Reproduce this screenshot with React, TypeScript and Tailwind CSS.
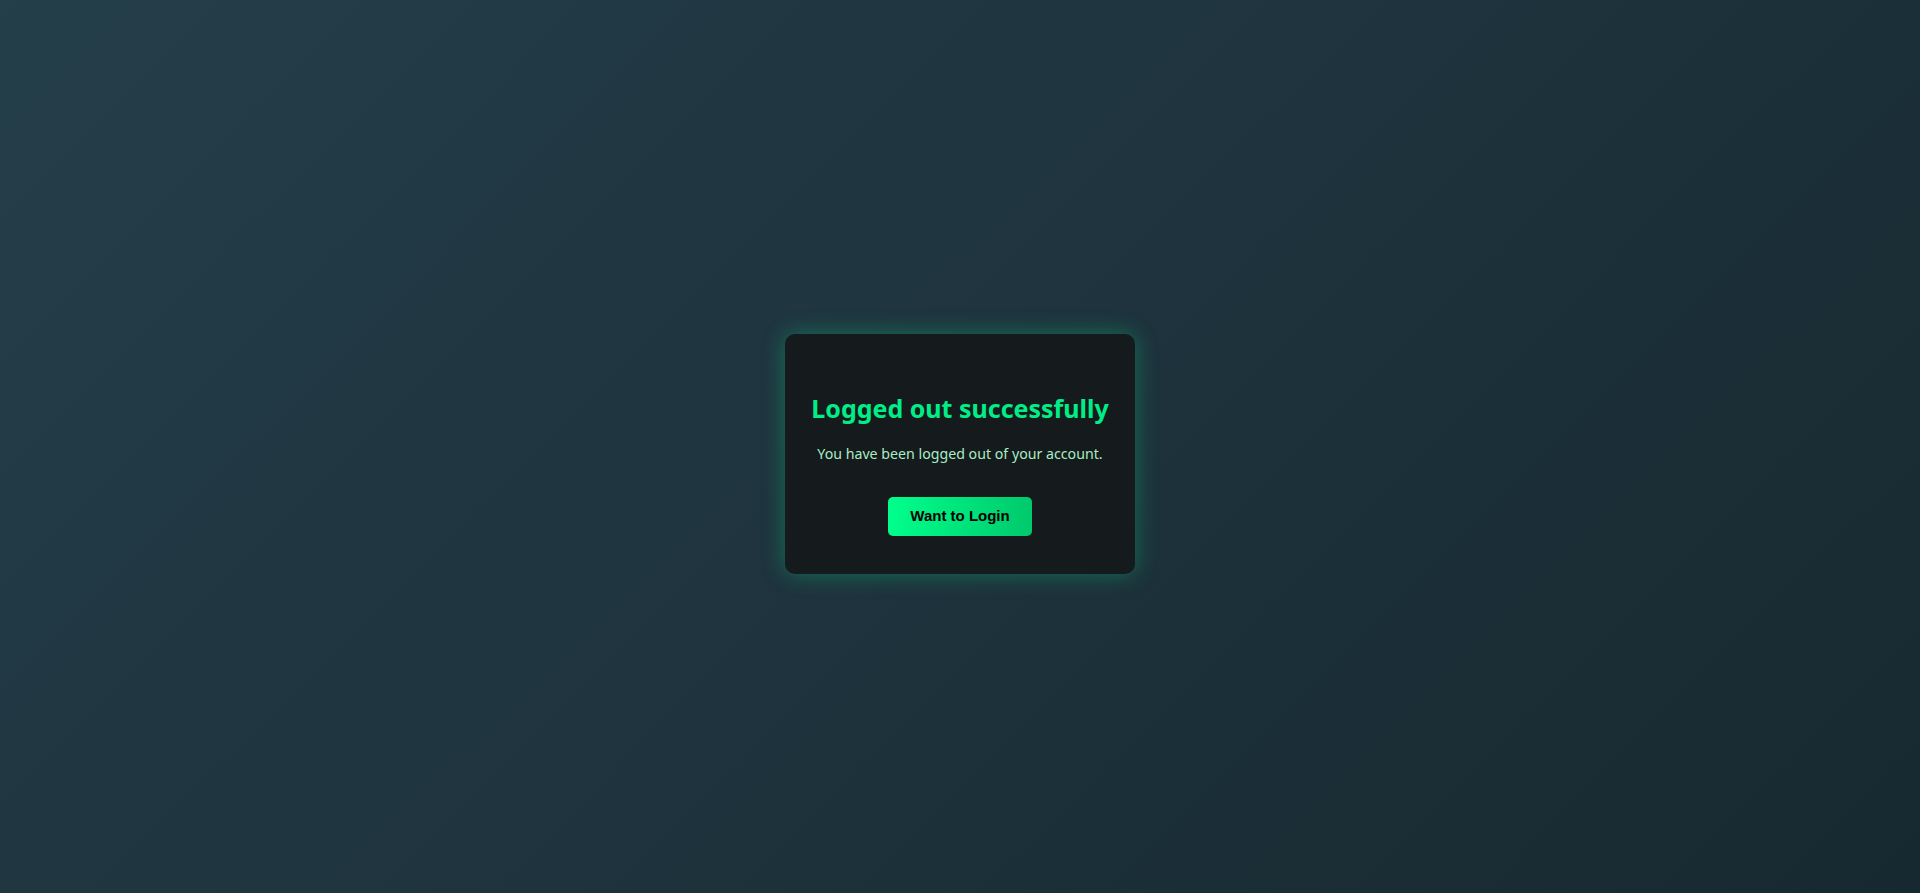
export default function App() {
  return (
    <div
      className="w-full h-[893px] flex items-center justify-center pt-[15px] bg-[linear-gradient(135deg,#243e4a_0%,#1e333d_50%,#172930_100%)]"
      style={{ fontFamily: '"Noto Sans", "Open Sans", sans-serif' }}
    >
      <div className="w-[350px] h-[240px] rounded-[10px] bg-[#151a1c] shadow-[0_0_22px_rgba(0,230,138,0.35)] flex flex-col items-center pt-[57px]">
        <h1 className="text-[25px] leading-[34px] font-bold text-[#00ee88]">Logged out successfully</h1>
        <p className="mt-[19px] text-[14.2px] leading-[20px] text-[#a8ecc6]">You have been logged out of your account.</p>
        <button
          className="mt-[33px] w-[144px] h-[39px] rounded-[5px] bg-[linear-gradient(90deg,#00ff8c,#00c96c)] text-black text-[15px] font-bold"
          style={{ fontFamily: '"Liberation Sans", Arial, sans-serif' }}
        >
          Want to Login
        </button>
      </div>
    </div>
  );
}
